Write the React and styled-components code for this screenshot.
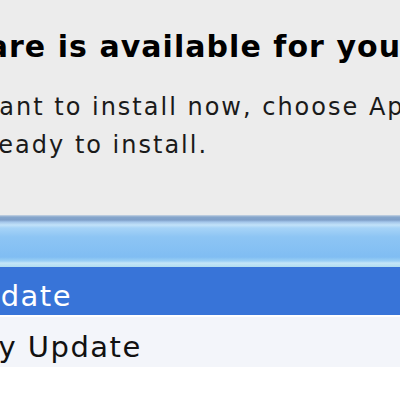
import React from "react";
import styled, { createGlobalStyle } from "styled-components";

const Global = createGlobalStyle`
  html, body {
    margin: 0;
    padding: 0;
    width: 400px;
    height: 400px;
    overflow: hidden;
    background: #ececec;
  }
  #root { width: 400px; height: 400px; }
`;

const Window = styled.div`
  width: 400px;
  height: 400px;
  display: flex;
  flex-direction: column;
  overflow: hidden;
  background: #ececec;
  font-family: "DejaVu Sans", "Liberation Sans", sans-serif;
`;

const Message = styled.div`
  padding-top: 27px;
  height: 215px;
  flex: none;
  box-sizing: border-box;
  white-space: nowrap;
`;

const Title = styled.div`
  font-size: 30px;
  line-height: 40px;
  letter-spacing: 1.05px;
  font-weight: bold;
  color: #000;
  text-indent: ${(p) => p.$indent}px;
`;

const Body = styled.div`
  margin-top: 21px;
  font-size: 24px;
  line-height: 38px;
  letter-spacing: 2px;
  color: #1a1a1a;
`;

const Line = styled.div`
  text-indent: ${(p) => p.$indent}px;
`;

const Table = styled.div`
  flex: 1;
  display: flex;
  flex-direction: column;
  background: #fff;
`;

const HeaderBar = styled.div`
  height: 52px;
  flex: none;
  background: linear-gradient(
    to bottom,
    #c9d6e4 0px,
    #86a6cc 2px,
    #7e9fc8 5px,
    #a3c6ea 7px,
    #c2e2f9 10px,
    #a6d3f7 13px,
    #8dc5f4 22px,
    #80bdf3 42px,
    #9bd0f5 46px,
    #c4e6f8 48px,
    #b0dcf0 52px
  );
`;

const Row = styled.div`
  height: ${(p) => p.$h}px;
  flex: none;
  box-sizing: border-box;
  display: flex;
  align-items: flex-end;
  padding-bottom: ${(p) => p.$pb}px;
  background: ${(p) => (p.$selected ? "#3874d8" : "#f3f5fa")};
  color: ${(p) => (p.$selected ? "#fff" : "#111")};
  border-bottom: ${(p) => (p.$selected ? "2px solid #fff" : "none")};
  font-size: 29px;
  line-height: 29px;
  letter-spacing: 1.5px;
  white-space: nowrap;
`;

const RowText = styled.span`
  text-indent: ${(p) => p.$indent}px;
  display: block;
`;

export default function App() {
  return (
    <>
      <Global />
      <Window>
        <Message>
          <Title $indent={-199}>New software is available for your computer.</Title>
          <Body>
            <Line $indent={-192}>
              If you don't want to install now, choose Apple menu &gt; Software Update when you're
            </Line>
            <Line $indent={-13}>ready to install.</Line>
          </Body>
        </Message>
        <Table>
          <HeaderBar />
          <Row $selected $h={50} $pb={4}>
            <RowText $indent={-203}>Mac OS X Update</RowText>
          </Row>
          <Row $h={50} $pb={5}>
            <RowText $indent={-114}>Security Update</RowText>
          </Row>
        </Table>
      </Window>
    </>
  );
}
